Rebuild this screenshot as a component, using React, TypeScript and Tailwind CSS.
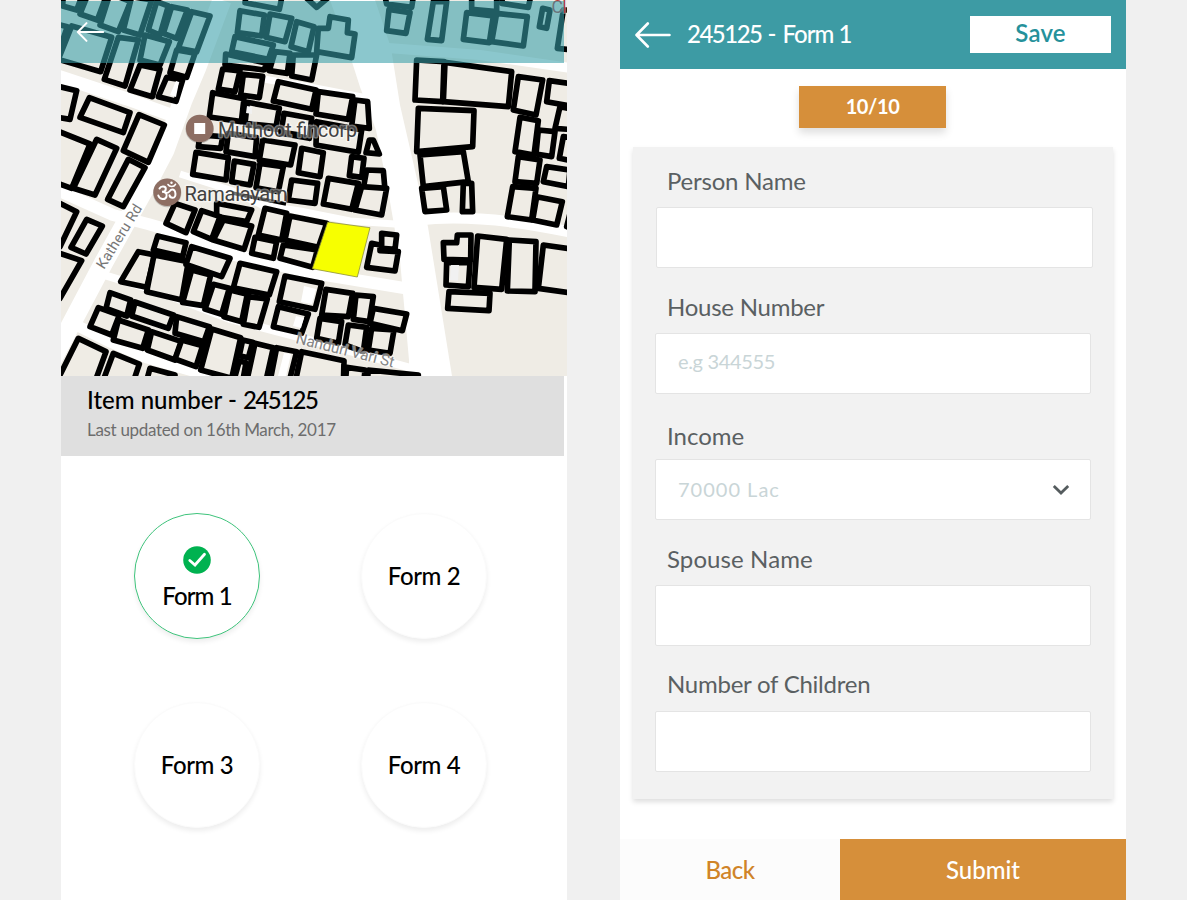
import React from 'react';

const topLeft = [
  '10,-20 65,-10 50,30 8,18', '85,-20 60,42 112,60 140,-15', '150,-20 120,75 175,95 212,5',
  '215,-10 190,90 240,105 275,0', '290,5 325,18 300,105 265,90', '335,20 382,30 350,115 310,100',
  '395,35 450,48 410,155 355,145', '35,78 155,112 122,215 -5,178', '-20,70 22,80 -5,160',
  '175,112 235,120 195,258 133,238', '255,105 328,125 300,195 240,180', '240,195 300,208 277,290 210,270',
  '350,150 405,160 380,232 330,218', '320,232 368,240 348,304 295,290', '-10,258 50,272 30,358 -10,352',
  '88,293 210,338 190,398 60,352', '237,344 313,375 265,487 190,452', '-20,388 90,432 35,565 -20,545',
  '110,418 170,445 105,585 40,565', '205,478 255,503 190,620 143,598', '497,162 620,190 612,210 495,195',
];
const topMid = [
  '45,8 148,28 158,-20 50,-20', '225,-10 260,22 298,-10', '30,32 103,45 95,108 22,98',
  '120,42 185,55 165,125 108,112', '200,65 252,80 235,155 183,140',
  '300,50 355,60 352,98 375,102 365,173 260,155 265,85 295,85', '15,110 130,135 115,178 5,155',
  '135,155 180,160 172,220 118,212', '190,165 260,165 245,240 185,228',
  '145,245 258,270 245,328 130,303', '265,275 368,290 355,358 258,342', '375,300 413,305 418,385 365,378',
  '260,365 395,390 385,457 258,435',
  '430,420 448,462 408,458 418,420', '215,445 280,458 270,530 205,518', '365,470 402,475 395,532 358,527',
  '410,510 460,512 465,570 400,565', '295,535 385,550 365,628 280,612', '395,560 470,565 455,645 375,630',
];
const bazaar = [
  '128,42 180,48 165,110 115,102', '190,58 248,64 238,128 182,120', '98,113 192,131 184,200 88,186',
  '202,142 298,160 288,215 195,205', '312,175 395,190 388,250 303,235', '60,240 128,245 122,280 55,275',
  '145,235 230,248 225,305 138,290', '248,255 345,270 332,330 238,315', '48,292 145,308 138,375 38,358',
  '163,318 222,328 210,390 155,380', '240,325 310,335 295,410 228,398', '335,375 413,385 405,445 325,435',
];
const topRight = [
  '-33,28 30,38 18,100 -40,92', '-45,-10 -40,12 35,22 40,-10', '100,5 140,5 125,122 82,118',
  '215,-10 215,28 290,35 290,-10', '305,10 385,22 392,-10 308,-10', '200,38 280,48 268,128 190,118',
  '290,40 382,50 370,138 275,125', '428,25 450,30 440,85 418,80', '490,30 472,145 520,150 530,30',
  '50,180 132,185 128,305 45,300', '135,187 335,215 325,320 130,305', '355,230 428,240 408,345 340,330',
  '448,242 520,252 520,320 440,305', '55,325 222,332 218,440 50,455', '60,465 190,455 205,545 70,560',
  '360,352 415,362 402,465 345,455', '415,390 465,395 455,470 408,462', '480,320 530,330 530,390 465,385',
  '490,410 530,415 530,485 478,475', '355,470 420,480 410,550 345,545', '440,500 510,510 505,560 430,545',
  '65,565 130,560 140,630 75,635', '190,550 215,550 218,635 187,635', '338,560 408,565 395,660 322,650',
  '410,590 487,605 470,675 398,660', '515,620 530,690 500,680',
];
const lowLeft = [
  '-20,30 50,65 0,170 -30,150', '80,88 127,108 78,192 33,172', '-15,185 65,212 0,325 -30,310',
  '470,40 575,60 560,95 470,80', '345,40 405,60 378,128 318,100', '425,62 480,80 455,148 400,125',
  '490,90 575,108 552,178 460,150', '293,138 378,158 368,200 280,180',
  '235,185 285,195 260,292 182,275', '282,195 385,215 365,330 260,305', '150,308 212,330 200,378 138,355',
  '225,336 340,375 325,415 215,378', '115,353 178,375 155,435 90,410', '175,390 265,420 248,475 160,450',
  '275,425 365,455 345,510 262,480',
  '55,445 138,485 105,575 -5,565', '160,490 238,522 215,590 130,570', '270,535 345,555 340,600 255,590',
];
const lowBlock = [
  '95,65 210,100 185,155 78,118', '95,135 152,150 130,242 68,232', '160,178 208,190 185,268 135,252',
  '210,195 262,208 245,290 192,275', '265,215 322,222 297,307 250,298', '240,115 350,140 328,210 220,188',
  '50,275 148,305 132,350 45,325', '65,345 128,362 108,425 45,402', '155,312 242,338 215,460 122,435',
  '248,345 278,352 265,398 238,392', '238,408 258,413 248,470 222,465', '285,355 340,368 315,480 260,470',
  '350,368 410,380 385,480 330,470',
];
const lowMid = [
  '105,55 170,70 155,150 85,135', '75,142 140,155 130,205 65,190', '180,78 290,100 265,172 165,150',
  '160,165 262,180 248,232 150,205', '455,130 500,135 495,178 455,175',
  '425,160 450,165 450,182 505,185 495,243 410,232', '165,258 275,280 255,358 148,335',
  '145,350 235,372 215,430 130,410', '288,298 368,310 355,380 275,375', '378,315 430,320 418,395 370,388',
  '430,355 530,372 517,422 420,400', '270,385 335,395 325,460 260,445', '355,405 410,412 400,485 345,465',
  '425,415 492,420 480,490 415,480', '215,485 342,512 340,590 195,580', '350,532 405,540 400,590 345,590',
  '415,540 565,555 560,600 410,600',
];
const lowRight = [
  '172,135 213,135 212,210 132,208 130,158 170,158', '140,218 210,218 205,290 138,285',
  '233,138 320,148 305,298 222,292', '328,150 408,155 405,305 322,303', '430,165 520,178 520,310 415,295',
  '147,305 270,310 267,362 143,355',
];

const districts = [
  { t: 'translate(60 0) scale(.33333)', shapes: topLeft },
  { t: 'translate(230 0) scale(.33333)', shapes: topMid },
  { t: 'translate(180 55) scale(.33333)', shapes: bazaar },
  { t: 'translate(400 0) scale(.33333)', shapes: topRight },
  { t: 'translate(60 190) scale(.33333)', shapes: lowLeft },
  { t: 'translate(160 225) scale(.33333)', shapes: lowBlock },
  { t: 'translate(230 190) scale(.33333)', shapes: lowMid },
  { t: 'translate(400 190) scale(.33333)', shapes: lowRight },
];

function ParcelMap() {
  return (
    <svg className="block h-[376px] w-[506px]" viewBox="61 0 506 376" fontFamily="Roboto, sans-serif">
      <rect x="61" y="0" width="506" height="376" fill="#efece5" />
      <g fill="none" stroke="#fff" strokeLinejoin="round">
        <path strokeWidth="19" d="M50 364L104 262L144 190L165 150L183 100L197 67L222 0" />
        <path strokeWidth="13" d="M55 75L127 99L185 120" />
        <path strokeWidth="12" d="M55 189L113 215L148 224L190 236L230 254L313 273L410 289" />
        <path strokeWidth="8" d="M104 275L160 292L230 319L313 341L440 376" />
        <path strokeWidth="11" d="M66 320L110 342L147 358L210 376" />
        <path strokeWidth="10" d="M388 48L480 55L570 68" />
        <path strokeWidth="7" d="M258 78L310 87L367 98" />
        <path strokeWidth="11" d="M418 220Q480 213 570 232" />
        <path strokeWidth="7" d="M180 174L230 190L262 205L300 211L350 221L395 224" />
      </g>
      <path fill="#fff" d="M330 0L352 62L360 87L376 130L388 190L400 260L409 360V376H452L428 227L400 105L391 48L375 0Z" />
      {districts.map((d) => (
        <g key={d.t} transform={d.t} fill="#efece5" stroke="#000" strokeWidth="17" strokeLinejoin="round">
          {d.shapes.map((p) => (
            <polygon key={p} points={p} />
          ))}
        </g>
      ))}
      <path d="M224 67.500L270 70M243 125L300 134M232 193L286 204" stroke="#000" strokeWidth="3.500" fill="none" />
      <path fill="#f1f1f1" d="M451 265L459 265L458 281L450 280ZM247 106L252 107L252 114L246 113Z" />
      <path fill="#fff" d="M304 286L316 289L312 304L301 302ZM296 316L304 318L301 328L293 326ZM284 353L291 354L286 376H278ZM176 81L179 82L176 97L170 95Z" />
      <polygon points="327.7,222 370,227.7 357.3,277 312.3,268.7" fill="#f7ff00" stroke="#8b8f3a" strokeWidth="0.8" />
      <circle cx="199.7" cy="129.3" r="14.2" fill="#000" opacity="0.2" />
      <circle cx="199.7" cy="128.5" r="13.8" fill="#8d6e63" />
      <rect x="194.2" y="123" width="11" height="11" fill="#fff" />
      <circle cx="167.2" cy="193" r="14.2" fill="#000" opacity="0.2" />
      <circle cx="167.2" cy="192.2" r="13.8" fill="#8d6e63" />
      <g fill="none" stroke="#fff" strokeWidth="2" strokeLinecap="round">
        <path d="M159.5 188.5C161 185.600 166 186 165.800 189C165.700 191.300 163 191.800 162 191.800C165 191.700 167.500 193.500 166.500 196.600C165.300 200.300 159.500 199.500 158.300 195.500" />
        <path d="M166.500 192.800C169.500 193.500 169.500 189.500 172.300 189.500C175.800 189.500 177 197.500 172.800 197.800C170.500 197.900 169.700 196.400 169.500 195.300" />
        <path strokeWidth="1.600" d="M168 184.500C169.500 187.200 174 187.200 175.500 184.300" />
      </g>
      <circle cx="171.500" cy="182.800" r="1.200" fill="#fff" />
      <g paintOrder="stroke" stroke="#fff" strokeLinejoin="round" fill="#414141">
        <text x="218" y="137" fontSize="19.500" textLength="139" strokeWidth="3" strokeOpacity="0.45">Muthoot fincorp</text>
        <text x="184.500" y="201" fontSize="20" textLength="103" strokeWidth="3" strokeOpacity="0.45">Ramalayam</text>
        <text transform="translate(104 270) rotate(-58)" fill="#777" fontSize="14.500" textLength="73" strokeWidth="2" strokeOpacity="0.5">Katheru Rd</text>
        <text transform="translate(295 343) rotate(14)" fill="#858585" fontSize="15.500" textLength="101" strokeWidth="2" strokeOpacity="0.5">Nanduri Vari St</text>
        <text x="551.500" y="13" fill="#b0393c" fontSize="17.500" textLength="15" strokeWidth="2" strokeOpacity="0.4">Cl</text>
      </g>
    </svg>
  );
}

function BackArrow({ className }: { className: string }) {
  return (
    <svg className={className} viewBox="0 0 36 26" fill="none" stroke="#fff" strokeWidth="2.600" strokeLinecap="round" strokeLinejoin="round">
      <path d="M34.500 13H1.800M12.800 1.500L1.500 13L12.800 24.500" />
    </svg>
  );
}

function FormCircle({ label, done = false }: { label: string; done?: boolean }) {
  return (
    <button
      className={`flex size-[126px] flex-col items-center justify-center rounded-full bg-white text-[24px] leading-[30px] font-medium text-black shadow-[0_3px_5px_rgba(0,0,0,0.07)] ${
        done ? 'border border-[#3fc47c] tracking-[-0.9px]' : 'border border-[#fbfbfb] tracking-[-0.4px]'
      }`}
    >
      {done && (
        <svg className="mt-[5px] mb-[7px] size-7" viewBox="0 0 28 28">
          <circle cx="14" cy="14" r="13.800" fill="#00b250" />
          <path d="M6.800 14.500L12 19L21.500 8.300" fill="none" stroke="#fff" strokeWidth="2.800" strokeLinecap="round" />
        </svg>
      )}
      <span>{label}</span>
    </button>
  );
}

type FieldProps = {
  label: string;
  labelClass: string;
  boxClass?: string;
  placeholder?: string;
  hintClass?: string;
  select?: boolean;
};

function Field({ label, labelClass, boxClass = 'ml-[22px] w-[436px]', placeholder, hintClass = '', select }: FieldProps) {
  return (
    <div className="flex flex-col">
      <div className={`ml-[34px] h-[30px] text-[24px] leading-[28px] whitespace-nowrap text-[#5a6062] ${labelClass}`}>{label}</div>
      <div className={`flex h-[61px] items-center justify-between rounded-[2px] border border-[#e4e4e4] bg-white pr-5 pl-[22px] ${boxClass}`}>
        <span className={`text-[20px] text-[#c9d5d7] ${hintClass}`}>{placeholder}</span>
        {select && (
          <svg className="h-3 w-[18px]" viewBox="0 0 18 12" fill="none" stroke="#555c5e" strokeWidth="2.800">
            <path d="M1.800 2L9 9L16.200 2" />
          </svg>
        )}
      </div>
    </div>
  );
}

export default function App() {
  return (
    <div className="flex h-[900px] w-[1187px] gap-[53px] overflow-hidden bg-[#f0f0f0] pl-[61px] font-[Lato,sans-serif]">
      <section className="flex w-[506px] flex-col bg-white">
        <div className="relative">
          <ParcelMap />
          <div className="absolute top-px left-0 flex h-[62px] w-[503px] items-center bg-[#379fa8]/58 pl-[15px]">
            <BackArrow className="h-5 w-[29px]" />
          </div>
        </div>
        <div className="h-20 w-[503px] bg-[#dfdfdf] pt-2 pl-[26px] whitespace-nowrap">
          <div className="text-[24px] leading-[32px] font-medium text-black">
            Item number - <span className="tracking-[-1.5px]">245125</span>
          </div>
          <div className="text-[17px] leading-[27px] tracking-[-0.32px] text-[#6d6d6d]">Last updated on 16th March, 2017</div>
        </div>
        <div className="mt-[57px] ml-[73px] grid grid-cols-[126px_126px] gap-x-[101px] gap-y-[63px]">
          <FormCircle label="Form 1" done />
          <FormCircle label="Form 2" />
          <FormCircle label="Form 3" />
          <FormCircle label="Form 4" />
        </div>
      </section>

      <section className="flex w-[506px] flex-col bg-white">
        <header className="flex h-[69px] shrink-0 items-center bg-[#3d9ba4] pr-[15px] pl-[15px]">
          <BackArrow className="h-[26px] w-9" />
          <h1 className="ml-4 pb-0.5 text-[24px] leading-[30px] font-medium whitespace-nowrap text-white">
            <span className="tracking-[-1.5px]">245125</span> - <span className="tracking-[-1px]">Form 1</span>
          </h1>
          <button className="ml-auto h-[37px] w-[141px] bg-white pb-1 text-[24px] leading-[30px] font-semibold tracking-[0.2px] text-[#25919b]">Save</button>
        </header>
        <div className="mt-[17px] ml-[179px] flex h-[42px] w-[147px] shrink-0 items-center justify-center bg-[#d68f3a] pb-[3px] text-[20px] font-bold tracking-[-0.4px] text-white shadow-[0_5px_8px_rgba(0,0,0,0.13)]">
          10/10
        </div>
        <div className="mt-[19px] ml-[13px] h-[652px] w-[480px] shrink-0 bg-[#f2f2f2] shadow-[0_3px_5px_rgba(0,0,0,0.13)]">
          <Field label="Person Name" labelClass="mt-5 mb-[10px] tracking-[-0.2px]" boxClass="ml-[23px] w-[437px]" />
          <Field label="House Number" labelClass="mt-[25px] mb-[10px] tracking-[-0.25px]" placeholder="e.g 344555" hintClass="pb-1.5 tracking-[-0.35px]" />
          <Field label="Income" labelClass="mt-[28px] mb-[7px]" placeholder="70000 Lac" hintClass="pb-0.5 tracking-[1px]" select />
          <Field label="Spouse Name" labelClass="mt-[25px] mb-[10px] tracking-[0.1px]" />
          <Field label="Number of Children" labelClass="mt-[24px] mb-[11px] tracking-[-0.25px]" />
        </div>
        <footer className="mt-auto flex h-[61px] shrink-0 text-[24px] font-medium">
          <button className="w-[220px] bg-[#fcfcfc] tracking-[-0.5px] text-[#d08428]">Back</button>
          <button className="w-[286px] bg-[#d68f3a] text-white">Submit</button>
        </footer>
      </section>
    </div>
  );
}
